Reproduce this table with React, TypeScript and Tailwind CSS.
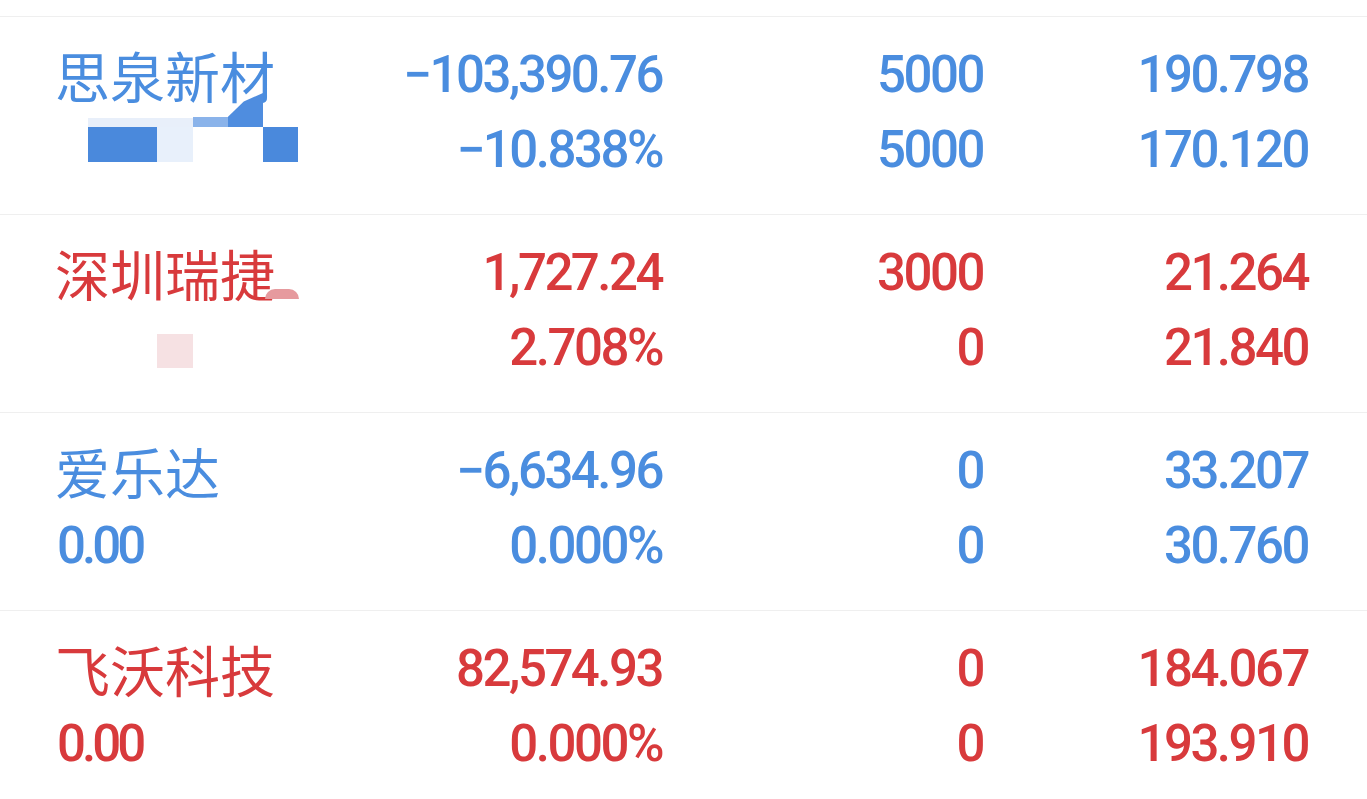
import React from "react";

type Row = {
  name: string;
  sub: string;
  color: "blue" | "red";
  a: [string, string];
  b: [string, string];
  c: [string, string];
  mosaic?: "one" | "two";
};

const rows: Row[] = [
  { name: "思泉新材", sub: "", color: "blue", a: ["−103,390.76", "−10.838%"], b: ["5000", "5000"], c: ["190.798", "170.120"], mosaic: "one" },
  { name: "深圳瑞捷", sub: "", color: "red", a: ["1,727.24", "2.708%"], b: ["3000", "0"], c: ["21.264", "21.840"], mosaic: "two" },
  { name: "爱乐达", sub: "0.00", color: "blue", a: ["−6,634.96", "0.000%"], b: ["0", "0"], c: ["33.207", "30.760"] },
  { name: "飞沃科技", sub: "0.00", color: "red", a: ["82,574.93", "0.000%"], b: ["0", "0"], c: ["184.067", "193.910"] },
];

const digits = "font-['Roboto',sans-serif] text-[51px] font-medium tracking-[-2.5px] leading-[75px]";

// pixelated privacy mask over the sub line of the first row
function MosaicOne() {
  return (
    <>
      <div className="absolute left-[31px] top-[81px] h-[9px] w-[105px] bg-[#e8effa]" />
      <div className="absolute left-[31px] top-[90px] h-[35px] w-[69px] bg-[#4a89dc]" />
      <div className="absolute left-[100px] top-[90px] h-[35px] w-[36px] bg-[#e8f0fb]" />
      <div className="absolute left-[136px] top-[80px] h-[10px] w-[35px] bg-[#8ab3ea]" />
      <div className="absolute left-[171px] top-[56px] h-[34px] w-[35px] bg-[#4f8ddf] [clip-path:polygon(100%_0,100%_100%,0_100%,0_70%,45%_25%)]" />
      <div className="absolute left-[206px] top-[90px] h-[35px] w-[35px] bg-[#4a89dc]" />
    </>
  );
}

function MosaicTwo() {
  return (
    <>
      <div className="absolute left-[208px] top-[54px] h-[10px] w-[34px] rounded-t-full bg-[#e69a9e]" />
      <div className="absolute left-[100px] top-[99px] h-[34px] w-[36px] bg-[#f6e1e3]" />
    </>
  );
}

function Cell({ top, bottom, tone }: { top: string; bottom: string; tone: string }) {
  return (
    <div className={`flex flex-col items-end ${tone} ${digits}`}>
      <span>{top}</span>
      <span>{bottom}</span>
    </div>
  );
}

export default function App() {
  return (
    <div className="min-h-[799px] w-[1367px] overflow-hidden bg-white pt-[16px]">
      {rows.map((r) => {
        const tone = r.color === "blue" ? "text-[#4a8ddf]" : "text-[#d83a3c]";
        return (
          <div
            key={r.name}
            className="grid h-[198px] grid-cols-[300px_305px_321px_325px] border-t border-[#efefef] pl-[57px] pr-[59px] pt-[20px]"
          >
            <div className={`relative flex flex-col items-start ${tone}`}>
              <span className="-ml-[2px] font-['Noto_Sans_CJK_SC',sans-serif] text-[55px] leading-[75px]">{r.name}</span>
              <span className={`${digits} tracking-[-4px]`}>{r.sub || "\u00a0"}</span>
              {r.mosaic === "one" && <MosaicOne />}
              {r.mosaic === "two" && <MosaicTwo />}
            </div>
            <Cell top={r.a[0]} bottom={r.a[1]} tone={tone} />
            <Cell top={r.b[0]} bottom={r.b[1]} tone={tone} />
            <Cell top={r.c[0]} bottom={r.c[1]} tone={tone} />
          </div>
        );
      })}
    </div>
  );
}
